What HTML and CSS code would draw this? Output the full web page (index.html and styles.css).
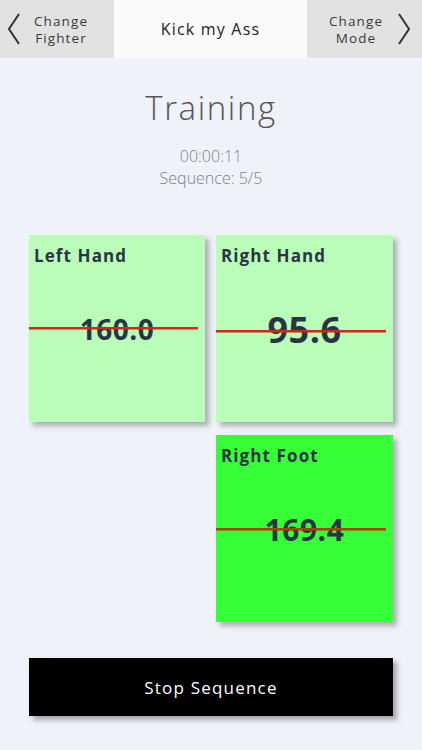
FILE: index.html
```html
<!DOCTYPE html>
<html>
<head>
<meta charset="utf-8">
<link rel="stylesheet" href="styles.css">
</head>
<body>
<header class="topbar">
  <div class="navbtn navbtn-left">
    <svg class="chev" width="14" height="32" viewBox="0 0 14 32"><path d="M12 1 L2 16 L12 31" fill="none" stroke="#333" stroke-width="2"/></svg>
    <div class="navtext"><div>Change</div><div>Fighter</div></div>
  </div>
  <div class="navtitle">Kick my Ass</div>
  <div class="navbtn navbtn-right">
    <div class="navtext"><div>Change</div><div>Mode</div></div>
    <svg class="chev" width="14" height="32" viewBox="0 0 14 32"><path d="M2 1 L12 16 L2 31" fill="none" stroke="#333" stroke-width="2"/></svg>
  </div>
</header>
<main class="content">
  <h1 class="title">Training</h1>
  <div class="info">
    <div>00:00:11</div>
    <div>Sequence: 5/5</div>
  </div>
  <div class="grid">
    <div class="card light">
      <div class="card-label">Left Hand</div>
      <div class="card-value v28">160.0</div>
      <div class="limit" style="top: 92px"></div>
    </div>
    <div class="card light">
      <div class="card-label">Right Hand</div>
      <div class="card-value v36">95.6</div>
      <div class="limit" style="top: 95px"></div>
    </div>
    <div class="card empty"></div>
    <div class="card bright">
      <div class="card-label">Right Foot</div>
      <div class="card-value v30">169.4</div>
      <div class="limit dark" style="top: 93px"></div>
    </div>
  </div>
  <button class="stop">Stop Sequence</button>
</main>
</body>
</html>
```
FILE: styles.css
```css
html, body {
  margin: 0;
  padding: 0;
}
body {
  width: 422px;
  height: 750px;
  background: #eff3f9;
  font-family: "Open Sans", "Liberation Sans", sans-serif;
  overflow: hidden;
}
.topbar {
  display: flex;
  height: 58px;
  background: #fafafa;
  border-bottom: 1px solid #f4f6f9;
}
.navbtn {
  width: 114px;
  background: #e2e2e2;
  display: flex;
  align-items: center;
  box-sizing: border-box;
}
.navbtn-left {
  padding-left: 7px;
  gap: 13px;
}
.navbtn-right {
  width: 115px;
  padding-left: 22px;
  gap: 14px;
}
.navtext {
  padding-top: 2px;
  font-size: 13.5px;
  line-height: 17px;
  color: #3a3a3a;
  text-align: center;
  letter-spacing: 1.1px;
}
.navtext div {
  height: 17px;
  line-height: 17px;
}
.navtitle {
  flex: 1;
  display: flex;
  align-items: center;
  justify-content: center;
  font-size: 16px;
  color: #222;
  letter-spacing: 1.2px;
}
.content {
  display: flex;
  flex-direction: column;
  align-items: center;
}
.title {
  margin: 27px 0 0;
  font-size: 33px;
  font-weight: 300;
  color: #555;
  letter-spacing: 1.6px;
  line-height: 44px;
}
.info {
  margin-top: 15px;
  font-size: 16px;
  font-weight: 300;
  color: #7e7e7e;
  text-align: center;
  line-height: 22px;
}
.grid {
  margin-top: 46px;
  display: grid;
  grid-template-columns: 176px 177px;
  grid-auto-rows: 187px;
  column-gap: 11px;
  row-gap: 13px;
}
.card {
  position: relative;
  box-shadow: 4px 4px 5px rgba(90, 90, 100, 0.45);
  color: #2b3445;
}
.card.empty {
  box-shadow: none;
}
.light {
  background: #b9fdb9;
}
.bright {
  background: #37ff37;
}
.card-label {
  padding: 9px 0 0 5px;
  font-size: 17px;
  font-weight: 700;
  letter-spacing: 1.1px;
}
.card-value {
  position: absolute;
  left: 0;
  right: 0;
  top: 50%;
  transform: translateY(-50%);
  text-align: center;
  font-weight: 700;
  letter-spacing: 0.5px;
}
.v28 { font-size: 28px; }
.v36 { font-size: 36px; }
.v30 { font-size: 30px; }
.limit {
  position: absolute;
  left: 0;
  right: 7px;
  height: 2px;
  background: #e0201a;
  box-shadow: 0 1px 0 rgba(160, 60, 0, 0.5);
}
.limit.dark {
  background: #b0400a;
}
.stop {
  margin-top: 36px;
  width: 364px;
  height: 58px;
  background: #000;
  color: #fff;
  border: none;
  font-family: "Open Sans", "Liberation Sans", sans-serif;
  font-size: 17px;
  letter-spacing: 1.2px;
  box-shadow: 4px 4px 5px rgba(90, 90, 100, 0.5);
}
```
